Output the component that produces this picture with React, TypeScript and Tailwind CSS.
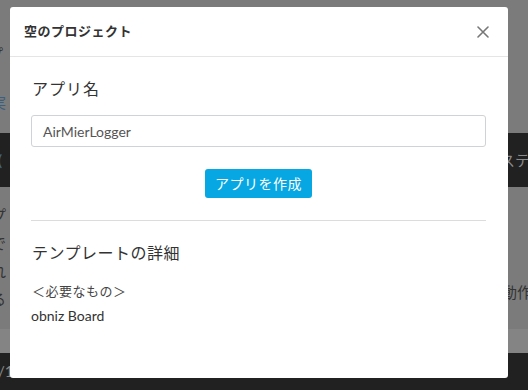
import React from "react";

const font = { fontFamily: 'Lato, "Noto Sans CJK JP", sans-serif' };

export default function App() {
  return (
    <div className="relative w-[528px] h-[390px] overflow-hidden bg-[#7b7b7b]" style={font}>
      {/* background page (dimmed) */}
      <div className="flex flex-col w-full h-full">
        <div className="h-[133px] flex flex-col text-[#2a2a2a]">
          <div className="h-[44px]" />
          <div className="text-[15px] leading-[20px] -ml-[12px] text-[#333]">プ</div>
          <div className="h-[28px]" />
          <div className="text-[15px] leading-[20px] -ml-[9px] text-[#3a5f80]">実</div>
        </div>
        <div className="h-[54px] bg-[#212121] flex items-center justify-between text-[15px] text-[#8a8a8a]">
          <span className="-ml-[2px] text-[#4a6a8a]">(</span>
          <span className="-mr-[2px]">ステ</span>
        </div>
        <div className="flex-1 flex">
          <div className="flex flex-col text-[15px] leading-[20px] text-[#333] -ml-[9px] pt-[18px] gap-[8px]">
            <span>プ</span>
            <span>で</span>
            <span>れ</span>
            <span>る</span>
          </div>
          <div className="flex-1" />
          <div className="flex flex-col justify-end pb-[27px] text-[15px] leading-[20px] text-[#333] -mr-[4px]">
            <span>動作</span>
          </div>
        </div>
        <div className="h-[24px] bg-[#848484]" />
        <div className="h-[37px] bg-[#212121] flex items-center text-[15px] text-[#8a8a8a]">
          <span className="-ml-[2px]">/1</span>
        </div>
      </div>

      {/* modal */}
      <div className="absolute left-[10px] top-[7px] w-[498px] h-[371px] bg-white rounded-[3px] flex flex-col text-[#333]">
        <div className="h-[50px] border-b border-[#e5e5e5] flex items-center justify-between pl-[14px] pr-[19px]">
          <span className="text-[13px] font-bold text-[#333] tracking-[0.5px]">空のプロジェクト</span>
          <svg width="12" height="12" viewBox="0 0 12 12">
            <path d="M1 1 L11 11 M11 1 L1 11" stroke="#777" strokeWidth="1.6" strokeLinecap="round" />
          </svg>
        </div>
        <div className="flex flex-col pl-[21px] pr-[22px] pt-[20px]">
          <div className="text-[16px] leading-[24px] pl-[1px] tracking-[1px] text-[#333]">アプリ名</div>
          <div className="mt-[14px] h-[32px] border border-[#cfd3d7] rounded-[3px] flex items-center pl-[11px] text-[14px] text-[#555]">
            AirMierLogger
          </div>
          <div className="mt-[22px] flex justify-center">
            <div className="h-[29px] w-[107px] rounded-[3px] bg-[#06a7e2] flex items-center justify-center text-white text-[14px] tracking-[0.5px]">
              アプリを作成
            </div>
          </div>
          <div className="mt-[22px] border-t border-[#dcdcdc]" />
          <div className="mt-[20px] text-[16px] leading-[24px] pl-[1px] tracking-[0.5px] text-[#333]">テンプレートの詳細</div>
          <div className="mt-[16px] text-[13px] leading-[20px] pl-[1px] tracking-[0.5px] text-[#444]">＜必要なもの＞</div>
          <div className="mt-[5px] text-[14px] leading-[20px] text-[#333]">obniz Board</div>
        </div>
      </div>
    </div>
  );
}
